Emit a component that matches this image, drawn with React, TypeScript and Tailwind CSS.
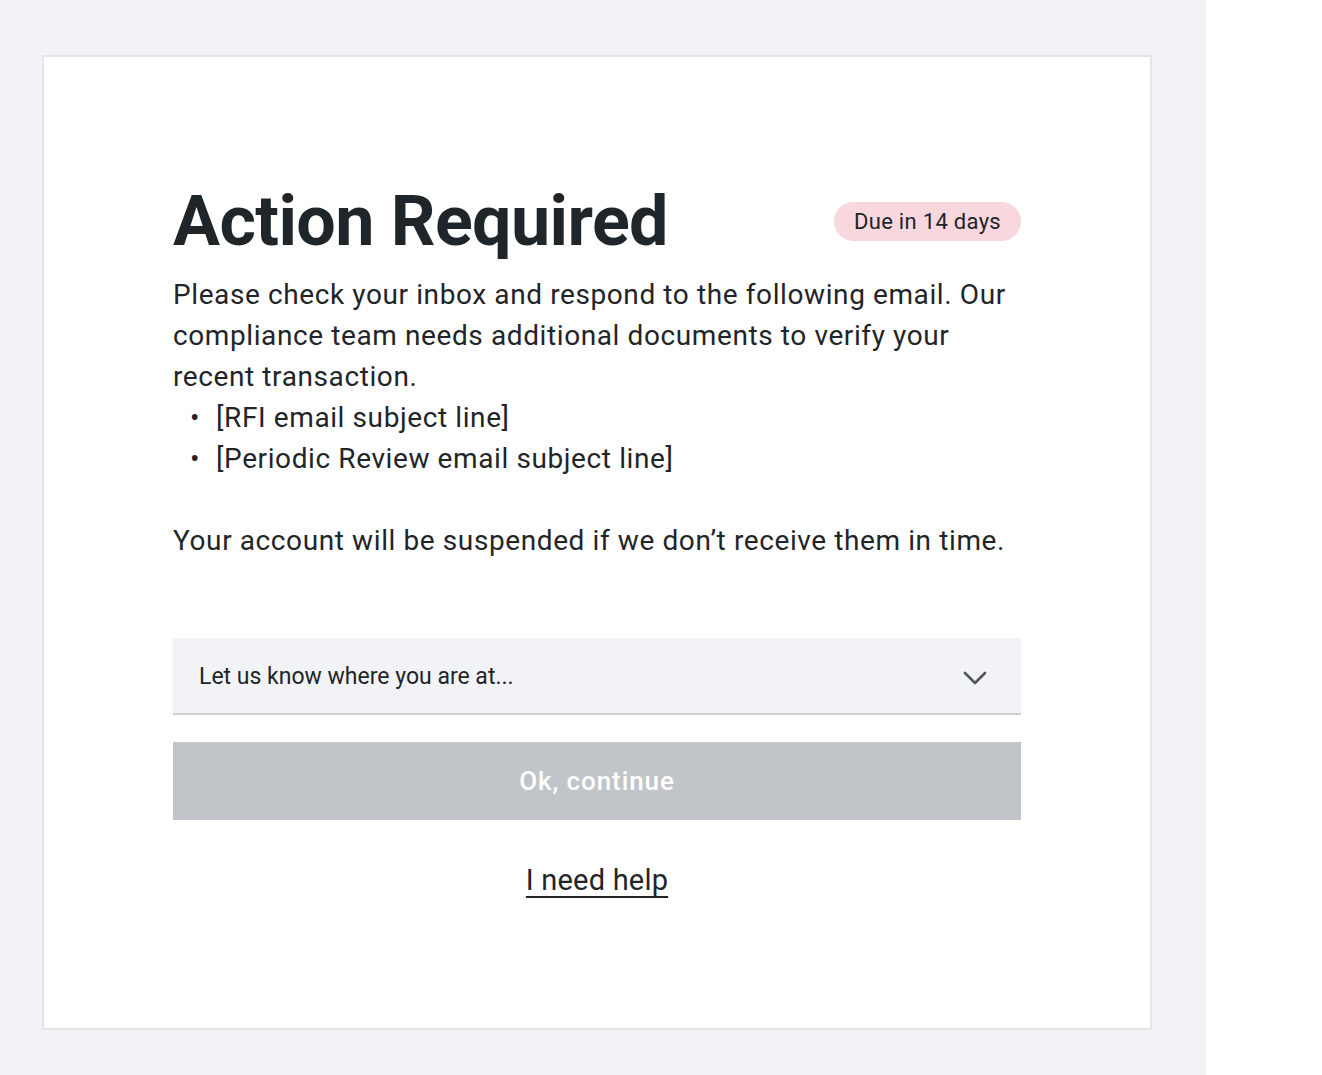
import React from "react";

const ChevronDown = () => (
  <svg width="24" height="14" viewBox="0 0 24 14" fill="none">
    <path
      d="M2 2l10 10 10-10"
      stroke="#50565b"
      strokeWidth="2.6"
      strokeLinecap="round"
      strokeLinejoin="round"
    />
  </svg>
);

export default function App() {
  return (
    <div
      className="flex min-h-[1075px] w-full bg-white"
      style={{ fontFamily: "Roboto, 'Liberation Sans', sans-serif" }}
    >
      <div className="w-[1206px] shrink-0 bg-[#f2f3f6] pl-[42px] pt-[55px]">
        {/* Card */}
        <div className="w-[1110px] h-[975px] bg-white border-2 border-[#e3e5e9] px-[129px] pt-[122px]">
          <div className="w-[848px]">
            <div className="flex items-center justify-between h-[84px]">
              <h1 className="text-[70px] leading-[84px] font-bold text-[#1f2528] tracking-[-0.6px]">
                Action Required
              </h1>
              <span className="rounded-full bg-[#f8d7de] px-[20px] h-[39px] flex items-center text-[22px] tracking-[0.3px] text-[#1f2528]">
                Due in 14 days
              </span>
            </div>

            <div className="text-[28px] leading-[41px] tracking-[0.6px] text-[#1f2528] mt-[11px]">
              <p>
                Please check your inbox and respond to the following email. Our
                compliance team needs additional documents to verify your
                recent transaction.
              </p>
              <ul className="pl-[17px]">
                <li className="flex gap-[16px]">
                  <span>•</span>
                  <span>[RFI email subject line]</span>
                </li>
                <li className="flex gap-[16px]">
                  <span>•</span>
                  <span>[Periodic Review email subject line]</span>
                </li>
              </ul>
              <p className="mt-[41px]">
                Your account will be suspended if we don’t receive them in time.
              </p>
            </div>

            {/* Select */}
            <div className="mt-[77px] h-[77px] bg-[#f2f3f6] border-b-2 border-[#ccd0d4] flex items-center justify-between pt-[4px] pl-[26px] pr-[34px]">
              <span className="text-[23px] text-[#1f2528]">
                Let us know where you are at...
              </span>
              <ChevronDown />
            </div>

            <button className="mt-[27px] w-full h-[78px] bg-[#c1c5c9] text-white text-[26px] font-medium tracking-[0.9px]">
              Ok, continue
            </button>

            <div className="mt-[43px] flex justify-center">
              <a className="text-[29px] leading-[34px] tracking-[0.2px] text-[#1f2528] underline underline-offset-[6px] decoration-[2px]">
                I need help
              </a>
            </div>
          </div>
        </div>
      </div>
    </div>
  );
}
